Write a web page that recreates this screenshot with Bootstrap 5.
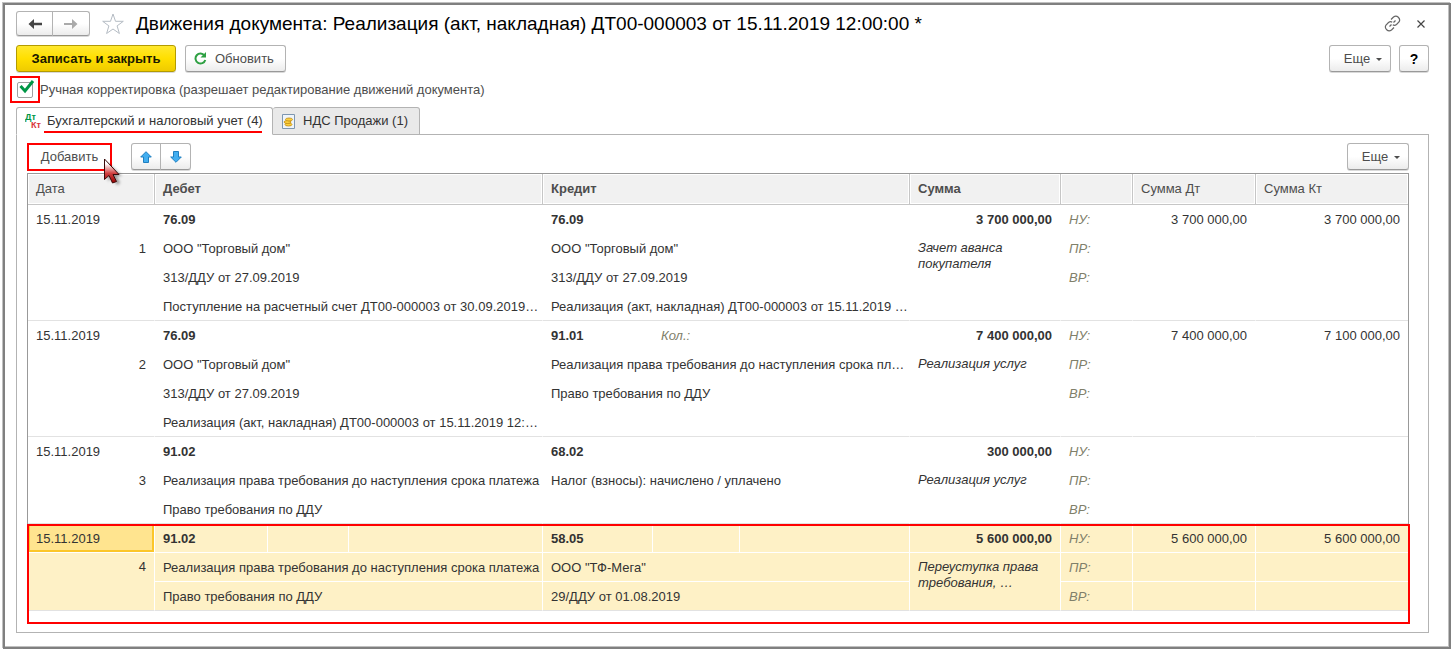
<!DOCTYPE html>
<html lang="ru">
<head>
<meta charset="utf-8">
<meta name="viewport" content="width=device-width, initial-scale=1">
<title>Движения документа</title>
<link href="https://cdn.jsdelivr.net/npm/bootstrap@5.3.0/dist/css/bootstrap.min.css" rel="stylesheet">
<style>
  body { font: 13px/16px "Liberation Sans", Arial, sans-serif; color: #333; background: #fff; }
  .win { margin: 3px 0 0 3px; border: 2px solid #808080; box-shadow: -1px -1px 0 #c0c0c0, inset -1px -1px 0 #c0c0c0; min-height: calc(100vh - 3px); padding: 6px 20px 14px 11px; }
  .win-title { font-size: 19px; line-height: 25px; color: #000; }
  .btn-form { --bs-btn-font-size: 13px; --bs-btn-line-height: 16px; --bs-btn-padding-y: 0; --bs-btn-padding-x: 0; --bs-btn-color: #4d4d4d; --bs-btn-border-color: #b3b3b3; --bs-btn-border-radius: 3px; height: 27px; border-bottom-color: #999; background: linear-gradient(#fff 50%, #ececec); box-shadow: 0 1px 0 #d9d9d9; }
  .toolbar { margin-top: 9px; }
  .btn-save { width: 160px; color: #1a1a00; border-color: #b39b00; background: linear-gradient(#ffe82e, #ffdf00 50%, #efcb00); }
  .btn-refresh { width: 101px; margin-left: 9px; }
  .btn-hist { width: 37px; height: 25px; }
  .btn-hist + .btn-hist { width: 38px; }
  .move-group { margin-left: 19px; }
  .btn-move { width: 30px; }
  .btn-move + .btn-move { width: 31px; }
  .btn-more { width: 62px; padding-left: 6px; }
  .btn-more::after { border-width: 3px; border-bottom: 0; margin-left: 6px; vertical-align: 2px; }
  .btn-help { width: 30px; color: #000; font-size: 14px; }
  .btn-add { width: 85px; height: 28px; margin-bottom: -1px; border: 2px solid red; border-radius: 0; background: #fff; box-shadow: none; }
  .btn-plain { border: 0; background: none; padding: 0; display: flex; }
  .manual { height: 27px; margin: 4px 0 4px -6px; }
  .marked { border: 2px solid red; width: 30px; height: 27px; padding: 4px 5px; }
  .tick { appearance: none; display: block; margin: 0; width: 16px; height: 16px; border: 1px solid #a0a0a0; border-radius: 2px; background: #fff; }
  .tick-mark { left: 9px; top: 4px; pointer-events: none; }
  .manual label { color: #4d4d4d; }
  .form-tabs { --bs-nav-tabs-border-width: 0; margin-bottom: -1px; position: relative; }
  .form-tabs .nav-link { height: 28px; padding: 0 8px; border: 1px solid #b3b3b3; border-radius: 3px 3px 0 0; color: #333; background: #e9e9e9; display: flex; align-items: center; margin: 0; }
  .form-tabs .nav-link.active { background: #fff; color: #333; border-color: #b3b3b3 #b3b3b3 #fff; }
  .tab-acc { width: 257px; }
  .tab-vat { width: 147px; border-left-width: 0 !important; }
  .tab-line { left: 28px; right: 11px; bottom: 2px; height: 2px; background: red; }
  .panel { border: 1px solid #b3b3b3; padding: 8px 19px 8px 10px; }
  .grid-box { border: 1px solid #999; margin-top: 3px; padding-bottom: 12px; }
  .ledger { width: 100%; table-layout: fixed; border-collapse: separate; border-spacing: 0; }
  .ledger th, .ledger td { padding: 0 8px; white-space: nowrap; overflow: hidden; height: 29px; border: 0 solid #fff; border-width: 0 1px 1px 0; }
  .ledger td { padding-top: 2px; }
  .ledger th { height: 31px; font-weight: 400; color: #4d4d4d; background: #f1f1f1; border-color: #c6c6c6; box-shadow: inset 0 0 0 1px #fff; }
  .ledger th.strong, .strong { font-weight: 700; }
  .ledger tr > :last-child { border-right-width: 0; }
  .ledger tr.last-line > td, .ledger td.to-end { border-bottom-color: #e2e2e2; vertical-align: middle; }
  .ledger td.to-end { vertical-align: top; padding-top: 6px; }
  .ledger td.note { font-style: italic; white-space: normal; }
  .ledger td.kind { font-style: italic; color: #80806a; }
  .current td { background: #fef1c6; }
  .current td.cell-on { background: #ffe48f; box-shadow: inset 0 0 0 2px #fbc62a; }
  .frame-red { left: -1px; right: -2px; bottom: -1px; height: 100px; border: 2px solid red; pointer-events: none; }
  .pointer { left: 75px; top: 13px; z-index: 2; pointer-events: none; }
</style>
</head>
<body>
<main class="win">
  <header class="d-flex align-items-center">
    <div class="btn-group" role="group" aria-label="История">
      <button type="button" class="btn btn-form btn-hist d-flex align-items-center justify-content-center" aria-label="Назад"><svg width="14" height="10" viewBox="0 0 14 10"><path d="M6 0 0.500 5 6 10V6.200H14V3.800H6Z" fill="#444"/></svg></button>
      <button type="button" class="btn btn-form btn-hist d-flex align-items-center justify-content-center" aria-label="Вперед"><svg width="14" height="10" viewBox="0 0 14 10"><path d="M8 0 13.500 5 8 10V6H0V4H8Z" fill="#aaa"/></svg></button>
    </div>
    <button type="button" class="btn-plain ms-2 me-1 ps-1 pe-2" aria-label="В избранное"><svg width="22" height="22" viewBox="0 0 22 22"><path d="M11 1 13.500 8.300H21.300L15.100 12.900 17.400 20.500 11 16 4.600 20.500 6.900 12.900 0.700 8.300H8.500Z" fill="none" stroke="#b5bcc4"/></svg></button>
    <h1 class="win-title m-0 flex-grow-1">Движения документа: Реализация (акт, накладная) ДТ00-000003 от 15.11.2019 12:00:00 *</h1>
    <button type="button" class="btn-plain me-3" aria-label="Получить ссылку"><svg width="17" height="17" viewBox="0 0 17 17" fill="none" stroke="#666" stroke-width="1.200"><path d="M7 4.500 9.500 2Q12 0 14.300 2.200T15 7L12.500 9.500Q10.500 11 8.800 9.800M10 12.500 7.500 15Q5 17 2.700 14.800T2 10L4.500 7.500Q6.500 6 8.200 7.200M5.500 11.500 7.500 9.500M9.500 7.500 11.500 5.500"/></svg></button>
    <button type="button" class="btn-plain me-1" aria-label="Закрыть"><svg width="8" height="8" viewBox="0 0 8 8"><path d="M0.500 0.500 7.500 7.500M7.500 0.500 0.500 7.500" stroke="#444" stroke-width="1.200"/></svg></button>
  </header>

  <div class="d-flex toolbar">
    <button type="button" class="btn btn-form btn-save fw-bold">Записать и закрыть</button>
    <button type="button" class="btn btn-form btn-refresh d-flex align-items-center"><svg class="ms-2 me-2" width="13" height="13" viewBox="0 0 13 13"><path d="M10.500 3.500A5 5 0 1 0 11.300 8" fill="none" stroke="#2ea043" stroke-width="2"/><path d="M12 0V5.500H6.500Z" fill="#2ea043"/></svg>Обновить</button>
    <button type="button" class="btn btn-form btn-more dropdown-toggle ms-auto">Еще</button>
    <button type="button" class="btn btn-form btn-help fw-bold ms-2">?</button>
  </div>

  <div class="manual d-flex align-items-center position-relative">
    <span class="marked"><input class="tick" type="checkbox" id="manual" checked></span>
    <svg class="tick-mark position-absolute" width="16" height="15" viewBox="0 0 16 15"><path d="M1.500 6 6 11 14 1" fill="none" stroke="#009646" stroke-width="3"/></svg>
    <label for="manual">Ручная корректировка (разрешает редактирование движений документа)</label>
  </div>

  <ul class="nav nav-tabs form-tabs" role="tablist">
    <li class="nav-item position-relative" role="presentation">
      <button type="button" class="nav-link active tab-acc" role="tab" aria-selected="true"><svg class="me-1 flex-shrink-0" width="18" height="18" viewBox="0 0 18 18" font-family="Liberation Sans" font-size="9" font-weight="700"><text x="0" y="8" fill="#009646">Дт</text><text x="6" y="16" fill="#d9343a">Кт</text></svg>Бухгалтерский и налоговый учет (4)</button>
      <span class="tab-line position-absolute"></span>
    </li>
    <li class="nav-item" role="presentation">
      <button type="button" class="nav-link tab-vat" role="tab" aria-selected="false"><svg class="me-2" width="14" height="15" viewBox="0 0 14 15"><path d="M1.500.500H13.500V14.500H1.500Z" fill="#eef4fa" stroke="#7d96b0"/><g fill="#fbd040" stroke="#c08a10" stroke-width=".8"><ellipse cx="7.500" cy="10.500" rx="3.500" ry="1.500"/><ellipse cx="6.500" cy="8" rx="3.500" ry="1.500"/><ellipse cx="8" cy="5.500" rx="3.500" ry="1.500"/></g></svg>НДС Продажи (1)</button>
    </li>
  </ul>

  <section class="panel">
    <div class="d-flex position-relative">
      <button type="button" class="btn btn-form btn-add">Добавить</button>
      <div class="btn-group move-group" role="group" aria-label="Порядок строк">
        <button type="button" class="btn btn-form btn-move d-flex align-items-center justify-content-center" aria-label="Вверх"><svg width="12" height="12" viewBox="0 0 12 12"><path d="M6 .7 11.300 6H8.500V11.500H3.500V6H.7Z" fill="#42aef0" stroke="#1f7fc0"/></svg></button>
        <button type="button" class="btn btn-form btn-move d-flex align-items-center justify-content-center" aria-label="Вниз"><svg width="12" height="12" viewBox="0 0 12 12"><path d="M6 11.300 11.300 6H8.500V.5H3.500V6H.7Z" fill="#42aef0" stroke="#1f7fc0"/></svg></button>
      </div>
      <button type="button" class="btn btn-form btn-more dropdown-toggle ms-auto">Еще</button>
      <svg class="pointer position-absolute" width="26" height="34" viewBox="0 0 26 34"><defs><linearGradient id="pg" x1="0" y1="0" x2="0" y2="1"><stop offset=".2" stop-color="#fff"/><stop offset=".6" stop-color="#d04040"/><stop offset="1" stop-color="#900"/></linearGradient><filter id="ps" x="-30%" y="-30%" width="180%" height="180%"><feGaussianBlur stdDeviation="1.500"/></filter></defs><path d="M6 7V25L11 21 15 29 18 27 14.500 20H20Z" fill="#0006" filter="url(#ps)"/><path d="M2.500 3V23.500L7 19.500 10.500 27 14.500 25.500 11 18.500H17Z" fill="url(#pg)" stroke="#3a0a0a"/></svg>
    </div>

    <div class="grid-box position-relative">
      <table class="ledger">
        <colgroup><col style="width:127px"><col style="width:113px"><col style="width:81px"><col style="width:194px"><col style="width:110px"><col style="width:87px"><col style="width:170px"><col style="width:151px"><col style="width:72px"><col style="width:123px"><col style="width:152px"></colgroup>
        <thead>
          <tr><th>Дата</th><th colspan="3" class="strong">Дебет</th><th colspan="3" class="strong">Кредит</th><th class="strong">Сумма</th><th></th><th>Сумма Дт</th><th>Сумма Кт</th></tr>
        </thead>
        <tbody>
          <tr><td>15.11.2019</td><td colspan="3" class="strong">76.09</td><td colspan="3" class="strong">76.09</td><td class="strong text-end">3 700 000,00</td><td class="kind">НУ:</td><td class="text-end">3 700 000,00</td><td class="text-end">3 700 000,00</td></tr>
          <tr><td class="text-end">1</td><td colspan="3">ООО "Торговый дом"</td><td colspan="3">ООО "Торговый дом"</td><td rowspan="3" class="note to-end">Зачет аванса покупателя</td><td class="kind">ПР:</td><td></td><td></td></tr>
          <tr><td></td><td colspan="3">313/ДДУ от 27.09.2019</td><td colspan="3">313/ДДУ от 27.09.2019</td><td class="kind">ВР:</td><td></td><td></td></tr>
          <tr class="last-line"><td></td><td colspan="3" class="pe-0">Поступление на расчетный счет ДТ00-000003 от 30.09.2019…</td><td colspan="3" class="pe-0">Реализация (акт, накладная) ДТ00-000003 от 15.11.2019 …</td><td></td><td></td><td></td></tr>
        </tbody>
        <tbody>
          <tr><td>15.11.2019</td><td colspan="3" class="strong">76.09</td><td class="strong">91.01</td><td class="kind">Кол.:</td><td></td><td class="strong text-end">7 400 000,00</td><td class="kind">НУ:</td><td class="text-end">7 400 000,00</td><td class="text-end">7 100 000,00</td></tr>
          <tr><td class="text-end">2</td><td colspan="3">ООО "Торговый дом"</td><td colspan="3" class="pe-0">Реализация права требования до наступления срока пл…</td><td rowspan="3" class="note to-end">Реализация услуг</td><td class="kind">ПР:</td><td></td><td></td></tr>
          <tr><td></td><td colspan="3">313/ДДУ от 27.09.2019</td><td colspan="3">Право требования по ДДУ</td><td class="kind">ВР:</td><td></td><td></td></tr>
          <tr class="last-line"><td></td><td colspan="3" class="pe-0">Реализация (акт, накладная) ДТ00-000003 от 15.11.2019 12:…</td><td colspan="3"></td><td></td><td></td><td></td></tr>
        </tbody>
        <tbody>
          <tr><td>15.11.2019</td><td colspan="3" class="strong">91.02</td><td colspan="3" class="strong">68.02</td><td class="strong text-end">300 000,00</td><td class="kind">НУ:</td><td></td><td></td></tr>
          <tr><td class="text-end">3</td><td colspan="3" class="pe-0">Реализация права требования до наступления срока платежа</td><td colspan="3">Налог (взносы): начислено / уплачено</td><td rowspan="2" class="note to-end">Реализация услуг</td><td class="kind">ПР:</td><td></td><td></td></tr>
          <tr class="last-line"><td></td><td colspan="3">Право требования по ДДУ</td><td colspan="3"></td><td class="kind">ВР:</td><td></td><td></td></tr>
        </tbody>
        <tbody class="current">
          <tr><td class="cell-on">15.11.2019</td><td class="strong">91.02</td><td></td><td></td><td class="strong">58.05</td><td></td><td></td><td class="strong text-end">5 600 000,00</td><td class="kind">НУ:</td><td class="text-end">5 600 000,00</td><td class="text-end">5 600 000,00</td></tr>
          <tr><td rowspan="2" class="to-end text-end">4</td><td colspan="3" class="pe-0">Реализация права требования до наступления срока платежа</td><td colspan="3">ООО "ТФ-Мега"</td><td rowspan="2" class="note to-end">Переуступка права требования, …</td><td class="kind">ПР:</td><td></td><td></td></tr>
          <tr class="last-line"><td colspan="3">Право требования по ДДУ</td><td colspan="3">29/ДДУ от 01.08.2019</td><td class="kind">ВР:</td><td></td><td></td></tr>
        </tbody>
      </table>
      <div class="frame-red position-absolute"></div>
    </div>
  </section>
</main>
<script src="https://cdn.jsdelivr.net/npm/bootstrap@5.3.0/dist/js/bootstrap.bundle.min.js"></script>
</body>
</html>
